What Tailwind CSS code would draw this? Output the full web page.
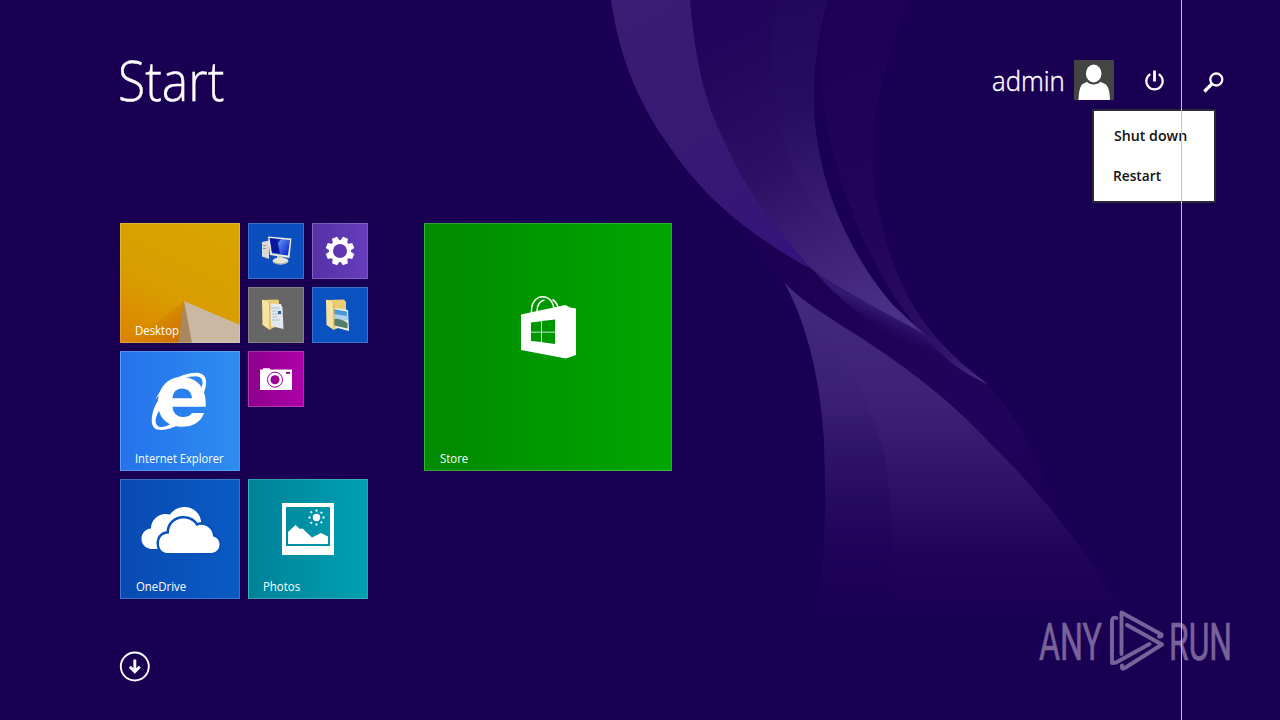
<!DOCTYPE html>
<html lang="en">
<head>
<meta charset="utf-8">
<title>Start</title>
<script src="https://cdn.jsdelivr.net/npm/@tailwindcss/browser@4"></script>
</head>
<body class="bg-[#1a0052] overflow-hidden">
<div class="relative isolate flex h-[720px] w-[1280px] flex-col overflow-hidden bg-[#1a0052] font-['Open_Sans','Noto_Sans',sans-serif] text-white">

  <!-- Wallpaper ribbons -->
  <svg class="absolute inset-0 -z-10" width="1280" height="720" viewBox="0 0 1280 720">
    <defs>
      <linearGradient id="a" gradientUnits="userSpaceOnUse" x1="640" y1="0" x2="790" y2="260">
        <stop offset="0" stop-color="#3b1c74"/><stop offset=".5" stop-color="#371a74"/><stop offset="1" stop-color="#33147b"/>
      </linearGradient>
      <linearGradient id="b" gradientUnits="userSpaceOnUse" x1="740" y1="20" x2="890" y2="310">
        <stop offset="0" stop-color="#21045b"/><stop offset=".45" stop-color="#2c1064"/><stop offset=".75" stop-color="#3e2277"/><stop offset="1" stop-color="#4b3088"/>
      </linearGradient>
      <linearGradient id="b2" gradientUnits="userSpaceOnUse" x1="790" y1="0" x2="850" y2="250">
        <stop offset="0" stop-color="#22085a"/><stop offset=".4" stop-color="#260d60"/><stop offset=".7" stop-color="#33186d"/><stop offset="1" stop-color="#42267b" stop-opacity="0"/>
      </linearGradient>
      <linearGradient id="c" gradientUnits="userSpaceOnUse" x1="840" y1="0" x2="985" y2="383">
        <stop offset="0" stop-color="#1e0056"/><stop offset=".6" stop-color="#23055b"/><stop offset=".85" stop-color="#2c0f66"/><stop offset="1" stop-color="#4a2e86"/>
      </linearGradient>
      <linearGradient id="d" gradientUnits="userSpaceOnUse" x1="850" y1="290" x2="850" y2="618">
        <stop offset="0" stop-color="#442a7e"/><stop offset=".35" stop-color="#3c2175"/><stop offset=".6" stop-color="#2d1267"/><stop offset=".8" stop-color="#20045a"/><stop offset="1" stop-color="#1a0052"/>
      </linearGradient>
      <linearGradient id="e" gradientUnits="userSpaceOnUse" x1="850" y1="300" x2="850" y2="618">
        <stop offset="0" stop-color="#1a0058" stop-opacity="0"/><stop offset=".3" stop-color="#1a0058" stop-opacity=".05"/><stop offset=".6" stop-color="#1a0058" stop-opacity=".28"/><stop offset="1" stop-color="#1a0058" stop-opacity=".4"/>
      </linearGradient>
      <linearGradient id="f" gradientUnits="userSpaceOnUse" x1="780" y1="250" x2="1050" y2="510">
        <stop offset="0" stop-color="#1b0053"/><stop offset=".5" stop-color="#21045a"/><stop offset=".8" stop-color="#20035a"/><stop offset="1" stop-color="#1b0054"/>
      </linearGradient>
      <linearGradient id="g" gradientUnits="userSpaceOnUse" x1="905" y1="322" x2="896" y2="342">
        <stop offset="0" stop-color="#331872"/><stop offset="1" stop-color="#22055b" stop-opacity="0"/>
      </linearGradient>
    </defs>
    <path fill="url(#f)" d="M740 220C800 268 850 290 920 330L987 383C1020 420 1048 475 1056 516C1000 450 940 390 860 337C830 316 800 300 784 282Z"/>
    <path fill="url(#c)" d="M828 0H908C885 60 872 110 873 157C875 215 890 262 910 300C930 335 955 360 988 384C960 372 942 357 922 333C870 275 800 130 828 0Z"/>
    <path fill="url(#g)" d="M813 270C850 290 890 310 922 331L988 384C930 362 860 325 813 270Z"/>
    <path fill="url(#b)" d="M690 0H828C813 50 809 105 820 157C832 215 862 270 893 305L924 334C890 315 850 295 813 270C740 210 696 100 690 0Z"/>
    <path fill="url(#b2)" d="M777 0H828C813 50 809 105 820 157C827 192 838 220 852 244C838 234 824 219 813 203C772 140 766 70 777 0Z"/>
    <path fill="url(#a)" d="M611 0H690C696 75 710 112 726 145C748 193 775 229 813 270C735 228 695 185 667 143C636 100 618 50 611 0Z"/>
    <path fill="url(#d)" d="M784 282C800 300 830 318 860 337C910 370 950 400 990 443C1045 497 1090 555 1126 618H817C826 560 826 500 824 440C821 385 808 325 784 282Z"/>
    <path fill="url(#e)" d="M784 282C830 340 870 390 884 455C894 510 894 560 890 618H817C826 560 826 500 824 440C821 385 808 325 784 282Z"/>
  </svg>

  <!-- Header -->
  <header class="flex h-[108px] shrink-0 items-start pt-[60px] pl-[118px]">
    <h1 class="mt-[-9px] w-[874px] text-[56px] leading-[56px] font-light [-webkit-text-stroke:0.4px_white]"><span class="inline-block origin-left scale-x-[.89]">Start</span></h1>
    <span class="w-[82px] text-[27px] leading-[41px] font-light [-webkit-text-stroke:0.4px_white]"><span class="inline-block origin-left scale-x-[.955]">admin</span></span>
    <svg class="shrink-0" width="40" height="40" viewBox="0 0 40 40"><path fill="#444" d="M0 0h40v40H0z"/><ellipse cx="19.7" cy="13.5" rx="7.8" ry="9" fill="#fff"/><path fill="#fff" d="M4.500 40C4.800 33 5.500 28 7.500 25C9 23.500 11.500 23 13 21.800C16 25.300 23 25.300 26.500 21.800C28 23 31 23.500 32.500 25C35 28 35.800 33 36 40Z"/></svg>
    <svg class="ml-[29px] mt-[9px] shrink-0" width="24" height="24" viewBox="0 0 24 24" fill="none" stroke="#fff"><path stroke-width="2.200" d="M7.300 5.100A8.200 8.200 0 1 0 15.700 5.100"/><path stroke-width="2.800" d="M11.500 1.500V12.500"/></svg>
    <svg class="ml-[35px] mt-[11px] shrink-0" width="24" height="24" viewBox="0 0 24 24" fill="none" stroke="#fff"><circle cx="14.300" cy="8.500" r="6" stroke-width="2.300"/><path stroke-width="3.200" d="M9.800 13L2.300 20.500"/></svg>
  </header>

  <!-- Tiles -->
  <main class="flex h-[492px] shrink-0 gap-14 pt-[115px] pl-[120px] text-[12px] leading-4">
    <div class="grid h-[376px] grid-cols-[120px_120px] grid-rows-[120px_120px_120px] gap-2">
      <div class="relative flex items-end overflow-hidden">
        <svg class="absolute inset-0" width="120" height="120" viewBox="0 0 120 120">
          <defs>
            <linearGradient id="y" x1=".6" y1="0" x2=".1" y2="1"><stop offset="0" stop-color="#d9a300"/><stop offset=".55" stop-color="#d99d00"/><stop offset="1" stop-color="#db8400"/></linearGradient>
            <linearGradient id="o" x1=".1" y1=".2" x2="1" y2=".8"><stop offset="0" stop-color="#d98600" stop-opacity="0"/><stop offset="1" stop-color="#c96a00"/></linearGradient>
          </defs>
          <path fill="url(#y)" d="M0 0h120v120H0z"/><path fill="url(#o)" d="M64 78L10 120H72Z"/>
          <path fill="#a9875f" d="M64 78L58 120H73Z"/><path fill="#cbb8a2" d="M64 78L120 102V120H72Z"/>
          <path fill="none" stroke="#fff" stroke-opacity=".2" d="M.5.5h119v119H.5z"/>
        </svg>
        <span class="relative mb-1 ml-[15px] origin-left scale-x-[.95]">Desktop</span>
      </div>
      <div class="grid grid-cols-[56px_56px] grid-rows-[56px_56px] gap-2">
        <div class="border border-white/20 bg-[#0a4fbd]">
          <svg width="54" height="54" viewBox="1 1 54 54">
            <defs><linearGradient id="s" x1="0" y1="0" x2="1" y2=".6"><stop offset="0" stop-color="#0a1fb0"/><stop offset=".42" stop-color="#1430c8"/><stop offset=".46" stop-color="#5d86ea"/><stop offset="1" stop-color="#1233cf"/></linearGradient></defs>
            <path fill="#d8dad8" d="M14 19L21 17.500V36L14 33.500Z"/><path fill="#8d939b" d="M15 22h3v1h-3zM15 25h3v1h-3z"/><path fill="#edebdf" d="M20 13.500L43.500 15.500L41.500 35L22 32Z"/><path fill="url(#s)" d="M21.500 15L42 17L40 32.500L24 30.500Z"/><path fill="#0a169d" d="M22.500 15.500L29 16.200L32 30.500L24 29.800Z"/><path fill="#c8c8bd" d="M29 33h6v5h-6z"/><ellipse cx="32.500" cy="38" rx="8" ry="3.500" fill="#e7e5da"/><path stroke="#aaa99f" fill="none" d="M25.500 39q7 4 14 0"/>
          </svg>
        </div>
        <div class="border border-white/20 bg-linear-to-r from-[#5631a7] to-[#663cbb]">
          <svg width="54" height="54" viewBox="-27 -27 54 54" fill="#fff">
            <circle r="9" fill="none" stroke="#fff" stroke-width="4"/>
            <g id="t"><path id="u" d="M-3.700 -9.500L-2.700 -14.300H2.700L3.700 -9.500Z" transform="rotate(22.500)"/><use href="#u" transform="rotate(45)"/><use href="#u" transform="rotate(90)"/><use href="#u" transform="rotate(135)"/></g><use href="#t" transform="rotate(180)"/>
          </svg>
        </div>
        <div class="border border-white/20 bg-[#666]">
          <svg width="54" height="54" viewBox="1 1 54 54">
            <path fill="#e9cd75" d="M14 13L30 12.500L31 14V38L21 43Z"/><path fill="#e4e9ef" d="M21 16.500L33 17L34.500 21L35.500 42L23 39Z"/><path stroke="#b3bfcd" d="M23 21h9M24 24h5M24 27h10M24 30h5M24 33h8"/><path fill="#2d62a4" d="M30 24h3v3h-3z"/><path fill="#f7e2a0" d="M14 12.500L21 15.500L22 43L14.500 38Z"/><path fill="#d9b65c" d="M21 15.500L22.500 16.500V42L21.500 43Z"/>
          </svg>
        </div>
        <div class="border border-white/20 bg-[#0a52c0]">
          <svg width="54" height="54" viewBox="1 1 54 54">
            <path fill="#e9cd75" d="M14 13L32 12.500L34 15V38L21 43Z"/><path fill="#f1f3ef" d="M21 21L36 23L37 44L22 40Z"/><path fill="#4c97d8" d="M21 22L35 24.500L35.500 33L22 31Z"/><path fill="#a9d3ec" d="M22 27L35.300 29V34L22 31Z"/><path fill="#557d6a" d="M22 32Q28 31 35.500 36V41.500L22 38.500Z"/><path fill="#f7e2a0" d="M14 12.500L21 15.500L22 43L14.500 38Z"/><path fill="#d9b65c" d="M21 15.500L22.500 16.500V42L21.500 43Z"/>
          </svg>
        </div>
      </div>

      <div class="relative flex items-end border border-white/20 bg-linear-to-r from-[#2672ec] to-[#2e8def]">
        <svg class="absolute -top-px -left-px" width="120" height="120" viewBox="0 0 120 120" fill="#fff">
          <path fill-rule="evenodd" d="M61.500 26C77 26 85.700 37 85.700 51V55.800H52.500C53 62 57 66 62.500 66C67.500 66 70.500 64.500 72 62H84C81 71 73 75.800 62 75.800C47.500 75.800 38 66.500 38 52C38 37 47.500 26 61.500 26ZM52.500 47.300H72C71.500 41 68 37.500 62 37.500C56.500 37.500 53 41 52.500 47.300Z"/>
          <path d="M35.500 48.500C43 33 61 21.800 76 21.800C87 21.800 88 31 84 41.500L81 38C84.500 30.500 82 25.300 75.500 25.300C62 25.300 46 34 35.500 48.500Z"/>
          <path d="M40 47C31 58 27.500 78.800 39.500 78.800C45.500 79.500 52.500 77 57.500 74.500L52 72C46.500 76 40 77.500 37.300 74.500C34 71 36 65 39.500 59Z"/>
        </svg>
        <span class="relative mb-[3px] ml-[14px] origin-left scale-x-[.93] whitespace-nowrap">Internet Explorer</span>
      </div>
      <div>
        <div class="h-14 w-14 border border-white/20 bg-linear-to-r from-[#8d008b] to-[#ad00a9]">
          <svg width="54" height="54" viewBox="1 1 54 54"><path fill="#fff" d="M12 18.500h3V17.300h7V18.500H44V39H12Z"/><circle cx="27" cy="28.700" r="7.500" fill="none" stroke="#9b0098"/><circle cx="27" cy="28.700" r="4.500" fill="#9b0098"/><path fill="#8d008b" d="M38 21h4v1.800h-4z"/></svg>
        </div>
      </div>

      <div class="relative flex items-end border border-white/20 bg-linear-to-r from-[#094ab2] to-[#0a5bc4]">
        <svg class="absolute -top-px -left-px" width="120" height="120" viewBox="0 0 120 120" fill="#fff">
          <path d="M31 70C25 69 21.500 65 21.500 60C21.500 54 25.500 50 31 49.500C31 40 40 33 50 35.500C54 30 59 28 64.500 28C73 28 80 34 81 42L82 50L50 70Z"/>
          <path stroke="#0a52bb" stroke-width="5" paint-order="stroke" d="M47 74C42 73.500 39 70 39 64.500C39 58 43 54.500 49 54.500C48.500 46 55 39.500 63 39.500C69 39.500 74 42 76.500 47C84 43 93 49 93 57.500C97 58 99.500 61.500 99.500 65.500C99.500 70 96 74 91 74Z"/>
        </svg>
        <span class="relative mb-[3px] ml-[15px] origin-left scale-x-[.95]">OneDrive</span>
      </div>
      <div class="relative flex items-end border border-white/20 bg-linear-to-r from-[#008299] to-[#00a0b1]">
        <svg class="absolute -top-px -left-px" width="120" height="120" viewBox="0 0 120 120" fill="#fff">
          <path fill-rule="evenodd" d="M34 24H86V76H34ZM38 28V67H82V28Z"/>
          <path d="M40 53L47.500 46L52 50L54.500 49.500L64 58.500L73 54L80 57.500V65H40Z"/>
          <circle cx="68.500" cy="38.500" r="3.700"/>
          <path stroke="#fff" stroke-width="1.900" stroke-dasharray="2 60" d="M68.500 30.500v3M68.500 44.500v3M60.500 38.500h3M74.500 38.500h3M62.500 32.500l2 2M72.700 42.700l2 2M62.500 44.500l2 -2M72.700 34.300l2 -2"/>
        </svg>
        <span class="relative mb-[3px] ml-[14px] origin-left scale-x-[.95]">Photos</span>
      </div>
    </div>

    <div class="relative flex h-[248px] w-[248px] items-end border border-white/20 bg-linear-to-r from-[#008a00] to-[#00a600]">
      <svg class="absolute -top-px -left-px" width="248" height="248" viewBox="0 0 248 248">
        <path fill="none" stroke="#fff" stroke-width="1.500" d="M107.500 92V88C107.500 69 130 69 130 88V89M113 91V88C113 81 117 77.500 120.500 77M128.500 76.500C132.500 79 134 83 134.500 87"/>
        <path fill="#fff" d="M97 91.500L141.500 82L146 84.500L152 85.500V132L142 135.500L97 127Z"/>
        <path fill="#009800" d="M107 99.500L117.200 98.300V108.700H107ZM118 98.100L131 96.500V108.700H118ZM107 109.500H117.200V119L107 118ZM118 109.500H131V121L118 119.200Z"/>
      </svg>
      <span class="relative mb-[3px] ml-[15px] origin-left scale-x-[.95]">Store</span>
    </div>
  </main>

  <footer class="flex flex-1 items-start pt-[51px] pl-[119px]">
    <svg width="32" height="32" viewBox="0 0 32 32" fill="none" stroke="#fff"><circle cx="15.800" cy="15.500" r="14" stroke-width="1.900"/><path stroke-width="2.900" d="M15.800 8.500V20.500M10.800 15.800L15.800 20.800L20.800 15.800"/></svg>
  </footer>

  <!-- Power menu -->
  <div class="absolute top-[109px] left-[1092px] flex h-[94px] w-[124px] flex-col border-2 border-[#2a2a33] bg-white pt-1 pl-[19px] text-[15px] leading-10 font-semibold text-[#111]">
    <span class="ml-px h-10 origin-left scale-x-[.945] whitespace-nowrap">Shut down</span>
    <span class="h-10 origin-left scale-x-[.915]">Restart</span>
  </div>

  <!-- Watermark -->
  <svg class="absolute top-[600px] left-[1030px] opacity-60" width="250" height="80" viewBox="0 0 250 80" fill="#b8a4cb" font-family="Roboto, sans-serif" font-size="52" font-weight="400">
    <g stroke="#b8a4cb" stroke-width=".7">
      <text x="9" y="59.500" textLength="63" lengthAdjust="spacingAndGlyphs">ANY</text>
      <text x="139" y="59.500" textLength="63" lengthAdjust="spacingAndGlyphs">RUN</text>
    </g>
    <g fill="none" stroke="#b8a4cb" stroke-width="3.900" stroke-linecap="round" stroke-linejoin="round">
      <path d="M91.500 54V12.500L131.500 34.500Q132.500 37 129 36.500"/>
      <path d="M86.500 18Q82 16.500 82 21V63L86 62.500L119.500 44"/>
      <path d="M97 25L132 44.500L94 68.500Q91 69.500 92 65.500"/>
    </g>
  </svg>

  <!-- Vertical line across the screen -->
  <div class="absolute top-0 left-[1181px] h-full w-px bg-[#d9b3e0]"></div>
</div>
</body>
</html>
